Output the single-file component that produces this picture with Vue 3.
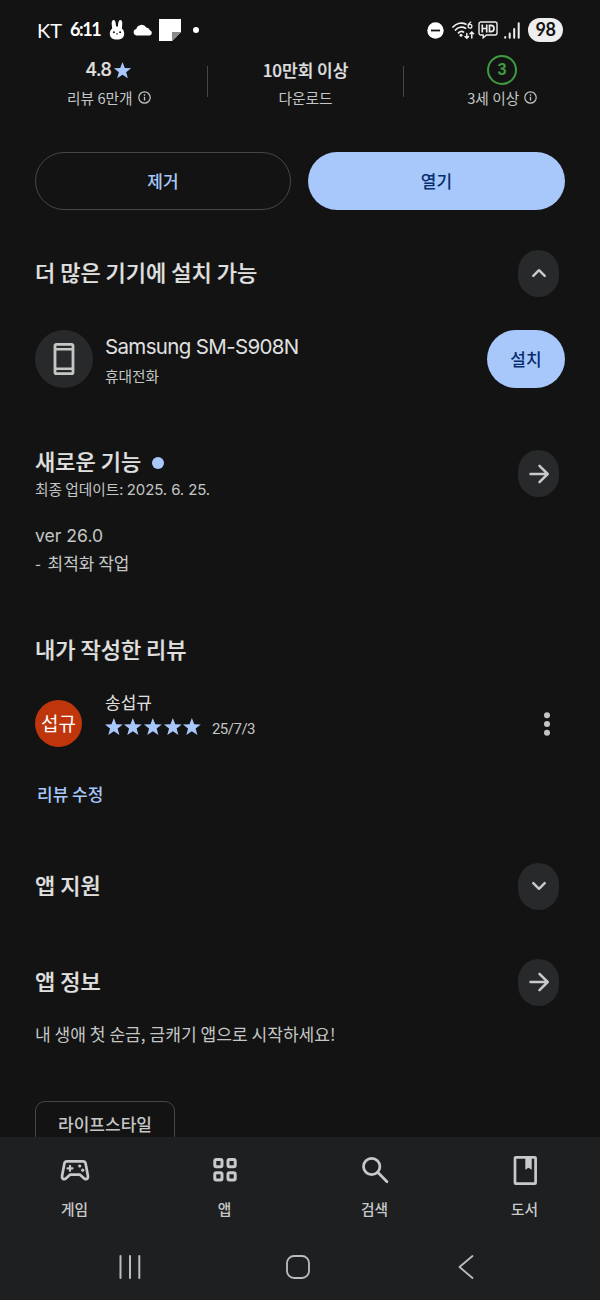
<script setup>
const star = 'M12 1.2l2.9 7.5 8 .4-6.3 5 2.200 7.800L12 17.500l-6.800 4.400 2.200-7.800-6.300-5 8-.4z'
const tabs = [
  { id: 'games', label: '게임' },
  { id: 'apps', label: '앱' },
  { id: 'search', label: '검색' },
  { id: 'books', label: '도서' },
]
</script>

<template>
  <div class="screen">
    <header class="status">
      <span class="carrier">KT</span>
      <span class="clock">6:11</span>
      <svg class="bunny" width="16" height="22" viewBox="0 0 16 22">
        <path d="M4.700 1C2.900 1 2.500 3.500 2.800 6c.1 1.300.2 2.500.4 3.600C1.600 10.800.8 12.700.8 14.700.8 18.600 3.600 20.600 8 20.600s7.200-2 7.200-5.900c0-2-.8-3.900-2.400-5.100.2-1.100.3-2.300.4-3.600.3-2.500-.1-5-1.900-5S9.200 4 8.900 7.500H7.100C6.800 4 6.500 1 4.700 1z" fill="#fff" />
        <circle cx="4.900" cy="13.300" r="1" fill="#151515" />
        <circle cx="11.100" cy="13.300" r="1" fill="#151515" />
        <path d="M7 14.500l1 .8 1-.8" stroke="#333" fill="none" />
      </svg>
      <svg class="cloud" width="20" height="12" viewBox="0 0 20 12">
        <path d="M3.500 11.500A3.300 3.300 0 0 1 3.300 5 5.500 5.500 0 0 1 13.300 3.500 4 4 0 0 1 16.800 6.200a2.700 2.700 0 0 1-.3 5.300z" fill="#fff" />
      </svg>
      <svg class="note" width="22" height="22" viewBox="0 0 22 22">
        <path d="M0 0h22v13l-9 9H0z" fill="#fff" />
        <path d="M13 13h9l-9 9z" fill="#8a8a8a" />
      </svg>
      <span class="bullet"></span>
      <div class="status-right">
        <svg width="17" height="17" viewBox="0 0 17 17">
          <circle cx="8.500" cy="8.500" r="8.200" fill="#fff" />
          <path d="M4 8.500h9" stroke="#151515" stroke-width="1.800" />
        </svg>
        <svg class="wifi" width="23" height="19" viewBox="0 0 23 19">
          <g fill="none" stroke="#eee" stroke-width="1.700" stroke-linecap="round">
            <path d="M1 6c3.500-4 9-5 13-2.800M3.500 9c2.500-3 7-3.700 10-1.800M6.500 11.800c1.500-1.500 3.500-1.800 5-.8" />
            <path d="M14.800 12.500v4.500M13 15.500l1.800 1.700 1.800-1.700M19.800 17v-5.500M18 12.700l1.800-1.700 1.800 1.700" stroke-width="1.500" />
            <path d="M18.800 1c-2 1.200-2.700 2.600-2.700 4.200a1.900 1.900 0 1 0 3.800 0c0-1.600-1.500-2.200-2.800-1.500" stroke-width="1.300" />
          </g>
          <circle cx="9" cy="14.200" r="1.500" fill="#eee" />
        </svg>
        <svg class="hd" width="20" height="18" viewBox="0 0 20 18">
          <path d="M3 1h14a2 2 0 0 1 2 2v9a2 2 0 0 1-2 2H8.500L5.200 16.800V14H3a2 2 0 0 1-2-2V3a2 2 0 0 1 2-2z" fill="none" stroke="#eee" stroke-width="1.400" />
          <path d="M4.300 3.500v8M8.700 3.500v8M4.300 7.500h4.400M11.500 4.300v6.400h1.300a3.200 3.200 0 0 0 0-6.400z" fill="none" stroke="#eee" stroke-width="1.700" />
        </svg>
        <svg class="signal" width="16" height="17" viewBox="0 0 16 17">
          <path d="M1.200 15v.8M5.700 11.500v4.300M10.200 7v8.800M14.700 1.200v14.600" stroke="#eee" stroke-width="2" stroke-linecap="round" />
        </svg>
        <span class="battery">98</span>
      </div>
    </header>

    <main>
      <section class="stats">
        <div class="stat">
          <div class="stat-top"><span class="score">4.8</span><svg width="19" height="19" viewBox="0 0 24 24"><path :d="star" fill="#a8c7fa" /></svg></div>
          <div class="stat-sub">리뷰 6만개 <svg width="13" height="13" viewBox="0 0 13 13"><circle cx="6.500" cy="6.500" r="5.700" fill="none" stroke="#c4c7c5" stroke-width="1.200" /><path d="M6.500 5.800v3.700M6.500 3.300v1.400" stroke="#c4c7c5" stroke-width="1.300" /></svg></div>
        </div>
        <i class="divider"></i>
        <div class="stat">
          <div class="stat-top">10만회 이상</div>
          <div class="stat-sub">다운로드</div>
        </div>
        <i class="divider"></i>
        <div class="stat">
          <div class="stat-top age-row"><span class="age">3</span></div>
          <div class="stat-sub">3세 이상 <svg width="13" height="13" viewBox="0 0 13 13"><circle cx="6.500" cy="6.500" r="5.700" fill="none" stroke="#c4c7c5" stroke-width="1.200" /><path d="M6.500 5.800v3.700M6.500 3.300v1.400" stroke="#c4c7c5" stroke-width="1.300" /></svg></div>
        </div>
      </section>

      <section class="actions">
        <button class="btn outline">제거</button>
        <button class="btn filled">열기</button>
      </section>

      <section class="head devices-head">
        <h2>더 많은 기기에 설치 가능</h2>
        <span class="chip"><svg width="20" height="20" viewBox="0 0 20 20"><path d="M4.300 12.800L10 7.200l5.700 5.600" /></svg></span>
      </section>

      <section class="device">
        <span class="device-icon">
          <svg width="22" height="34" viewBox="0 0 22 34"><rect x="2" y="2.300" width="18" height="29.400" rx="1.500" fill="none" stroke="#c4c7c5" stroke-width="2.800" /><path d="M2 7.300h18M2 26.700h18" stroke="#c4c7c5" stroke-width="2.400" /></svg>
        </span>
        <div class="device-text">
          <div class="device-name">Samsung SM-S908N</div>
          <div class="device-kind">휴대전화</div>
        </div>
        <button class="btn filled install">설치</button>
      </section>

      <section class="head news-head">
        <div>
          <h2>새로운 기능<i class="dot"></i></h2>
          <p class="updated">최종 업데이트: <span>2025. 6. 25.</span></p>
        </div>
        <span class="chip"><svg width="24" height="24" viewBox="0 0 24 24"><path d="M3.500 12h17M12.500 3.800l8.200 8.200-8.200 8.200" /></svg></span>
      </section>

      <p class="notes"><span>ver 26.0</span><br><b>-</b>최적화 작업</p>

      <h2 class="review-title">내가 작성한 리뷰</h2>
      <section class="review">
        <span class="avatar">섭규</span>
        <div class="review-text">
          <div class="name">송섭규</div>
          <div class="rating">
            <svg v-for="n in 5" :key="n" width="19.700" height="19.700" viewBox="0 0 24 24"><path :d="star" fill="#a8c7fa" /></svg>
            <span class="date">25/7/3</span>
          </div>
        </div>
        <svg class="more" width="8" height="26" viewBox="0 0 8 26"><g fill="#c4c4c4"><circle cx="4" cy="4.200" r="3" /><circle cx="4" cy="13" r="3" /><circle cx="4" cy="21.800" r="3" /></g></svg>
      </section>
      <a class="edit">리뷰 수정</a>

      <section class="head support">
        <h2>앱 지원</h2>
        <span class="chip"><svg width="20" height="20" viewBox="0 0 20 20"><path d="M4.300 7.200L10 12.800l5.700-5.600" /></svg></span>
      </section>
      <section class="head about">
        <h2>앱 정보</h2>
        <span class="chip"><svg width="24" height="24" viewBox="0 0 24 24"><path d="M3.500 12h17M12.500 3.800l8.200 8.200-8.200 8.200" /></svg></span>
      </section>
      <p class="desc">내 생애 첫 순금, 금캐기 앱으로 시작하세요!</p>
      <span class="tag">라이프스타일</span>
    </main>

    <footer>
      <nav class="tabs">
        <div v-for="t in tabs" :key="t.id" class="tab">
          <svg width="32" height="32" viewBox="0 0 32 32" fill="none" stroke="#c8c9ca" stroke-width="2.700" stroke-linejoin="round" stroke-linecap="round">
            <template v-if="t.id === 'games'">
              <path d="M8 7.300h16c1.400 0 2.300.8 2.600 2.200l2.300 12.200c.5 3.500-2.400 4.200-4 2.600L21 20.700H11l-3.900 3.600c-1.600 1.600-4.500.9-4-2.600L5.400 9.500C5.700 8.100 6.600 7.300 8 7.300z" />
              <path d="M11 11.800v5M8.500 14.300h5" stroke-width="2.200" />
              <g fill="#c8c9ca" stroke="none"><circle cx="20.700" cy="12" r="1.600" /><circle cx="23.700" cy="16.200" r="1.600" /></g>
            </template>
            <template v-else-if="t.id === 'apps'">
              <g stroke-width="3">
                <rect x="5.800" y="5.500" width="7.200" height="7.200" rx="1.500" /><rect x="19" y="5.500" width="7.200" height="7.200" rx="1.500" />
                <rect x="5.800" y="18.700" width="7.200" height="7.200" rx="1.500" /><rect x="19" y="18.700" width="7.200" height="7.200" rx="1.500" />
              </g>
            </template>
            <template v-else-if="t.id === 'search'">
              <circle cx="12.700" cy="12.500" r="8.200" /><path d="M18.700 18.300l9.300 9.500" />
            </template>
            <template v-else>
              <rect x="6" y="3.300" width="20.600" height="26.400" rx=".8" />
              <path d="M16.300 4h6.400v11.800l-3.200-2.100-3.200 2.100z" fill="#c8c9ca" stroke="none" />
            </template>
          </svg>
          <span>{{ t.label }}</span>
        </div>
      </nav>
      <div class="system">
        <svg width="24" height="26" viewBox="0 0 24 26"><path d="M2.500 2v22M12 2v22M21.300 2v22" stroke-width="2" /></svg>
        <svg class="home" width="26" height="26" viewBox="0 0 26 26"><rect x="2" y="2" width="22" height="22" rx="7" stroke-width="1.800" /></svg>
        <svg width="20" height="26" viewBox="0 0 20 26"><path d="M16.500 2L3.500 13l13 11" stroke-width="1.800" /></svg>
      </div>
    </footer>
  </div>
</template>

<style>
body { background: #131313; }
</style>

<style scoped>
* { box-sizing: border-box; }
.screen {
  width: 600px; height: 1300px; overflow: hidden; display: flex; flex-direction: column;
  background: #131313; color: #e0e0e0; font-family: "Noto Sans CJK KR", sans-serif; font-size: 17px;
}
svg { display: block; flex: none; }
h2, p { margin: 0; }
h2 { font-size: 22px; font-weight: 500; line-height: 26px; padding-bottom: 4px; white-space: nowrap; -webkit-text-stroke: .2px #e0e0e0; }
.status { height: 54px; flex: none; padding: 6px 37px 0; display: flex; align-items: center; color: #fff; font-family: Lato, sans-serif; }
.carrier { width: 33px; font-size: 20px; line-height: 24px; padding-bottom: 1px; }
.clock { width: 39px; font-size: 18px; line-height: 24px; padding-bottom: 3px; font-weight: 700; letter-spacing: -1.400px; }
.cloud { margin-left: 8px; }
.note { margin-left: 6px; }
.bullet { width: 6px; height: 6px; border-radius: 50%; background: #fff; margin-left: 12px; }
.status-right { margin-left: auto; display: flex; align-items: center; }
.wifi { margin-left: 8px; }
.hd { margin-left: 3px; }
.signal { margin-left: 6px; }
.battery { margin-left: 8px; width: 35px; height: 24px; border-radius: 12px; background: #eee; color: #151515; font: 700 18px/23px Lato, sans-serif; letter-spacing: -.5px; text-align: center; }

main { flex: 1; min-height: 0; overflow: hidden; padding: 0 35px; }
.stats { display: flex; margin: 0 -35px; padding-left: 11px; height: 62px; }
.stat { width: 196px; text-align: center; }
.stat-top { height: 32px; padding-bottom: 2px; display: flex; align-items: center; justify-content: center; font-weight: 500; font-size: 17px; -webkit-text-stroke: .2px currentColor; }
.stat-top svg { margin-top: 2px; }
.age-row { padding-bottom: 0; }
.score { font-family: Inter, sans-serif; font-size: 18px; letter-spacing: -.5px; margin-right: 2px; }
.stat-sub { height: 24px; padding-bottom: 2px; display: flex; align-items: center; justify-content: center; gap: 5px; font-size: 14.700px; color: #c4c7c5; }
.stat-sub svg { margin-top: 1px; }
.divider { width: 1px; height: 31px; margin-top: 12px; background: #444746; }
.age { width: 30px; height: 30px; border: 2px solid #419b45; border-radius: 50%; color: #419b45; font: 700 16px/26px Roboto, sans-serif; text-align: center; -webkit-text-stroke: 0; }

.actions { display: grid; grid-template-columns: 256px 257px; gap: 17px; margin-top: 36px; }
.btn { height: 58px; border: 0; border-radius: 29px; font: 500 17px "Noto Sans CJK KR", sans-serif; padding: 0 0 2px; }
.outline { background: transparent; border: 1.500px solid #444746; color: #a8c7fa; }
.filled { background: #a8c7fa; color: #062e6f; }
.head { display: flex; justify-content: space-between; align-items: center; height: 46px; padding-right: 6px; }
.chip { width: 41px; height: 47px; border-radius: 20.500px / 21px; background: #28292a; display: flex; align-items: center; justify-content: center; flex: none; }
.chip path { fill: none; stroke: #c8c9ca; stroke-width: 2.500; stroke-linecap: round; stroke-linejoin: round; }
.devices-head { margin-top: 40px; }
.device { display: flex; margin-top: 34px; height: 58px; }
.device-icon { width: 58px; height: 58px; border-radius: 50%; background: #28292a; display: flex; align-items: center; justify-content: center; }
.device-text { margin-left: 12px; flex: 1; }
.device-name { font: 400 20.500px/34px Inter, sans-serif; letter-spacing: -.65px; white-space: nowrap; }
.device-kind { font-size: 14.700px; line-height: 23px; color: #c4c7c5; }
.install { flex: none; width: 78px; }
.news-head { margin-top: 59px; height: 54px; align-items: flex-start; }
.news-head .chip { margin-top: 3px; }
.dot { display: inline-block; width: 12px; height: 12px; border-radius: 50%; background: #a8c7fa; margin-left: 11px; vertical-align: 1px; }
.updated { font-size: 14.700px; line-height: 24px; color: #c4c7c5; white-space: nowrap; }
.updated span { font-family: Inter, sans-serif; font-size: 15px; letter-spacing: -.1px; }
.notes { margin-top: 20px; line-height: 27px; height: 55px; color: #c4c7c5; }
.notes span { font-family: Inter, sans-serif; font-size: 17.600px; }
.notes b { display: inline-block; width: 12.500px; font-weight: 400; }
.review-title { margin-top: 59px; }
.review { display: flex; margin-top: 25px; height: 57px; }
.avatar { width: 47px; height: 47px; margin-top: 10px; border-radius: 50%; background: #bf360c; color: #fff; font-size: 19px; line-height: 46px; text-align: center; }
.review-text { margin-left: 23px; flex: 1; }
.name { line-height: 24px; }
.rating { height: 26px; display: flex; align-items: center; margin-left: -1.500px; }
.date { font: 15px/20px Roboto, sans-serif; letter-spacing: -.5px; color: #c4c7c5; margin: 3px 0 0 10px; }
.more { margin: 21px 14px 0 0; }
.edit { display: block; margin: 35px 0 0 2px; line-height: 24px; color: #a8c7fa; font-weight: 500; }
.support { margin-top: 57px; }
.about { margin-top: 50px; }
.desc { margin-top: 17px; line-height: 24px; font-size: 17.100px; color: #c4c7c5; white-space: nowrap; }
.tag { display: block; margin-top: 55px; width: 140px; height: 58px; border: 1.500px solid #444746; border-radius: 10px; line-height: 44px; text-align: center; color: #c4c7c5; font-weight: 500; }

footer { height: 163px; flex: none; background: #1e1f20; }
.tabs { display: grid; grid-template-columns: repeat(4, 150px); height: 96px; }
.tab { display: flex; flex-direction: column; align-items: center; padding-top: 17px; font-size: 14.700px; font-weight: 500; color: #c8c9ca; }
.tab span { margin: 11px 1px 0 0; line-height: 24px; }
.system { display: flex; padding: 21px 124px 0 118px; justify-content: space-between; }
.system svg { fill: none; stroke: #bbbcbd; stroke-linecap: round; stroke-linejoin: round; }
.home { margin-right: 2px; }
</style>
